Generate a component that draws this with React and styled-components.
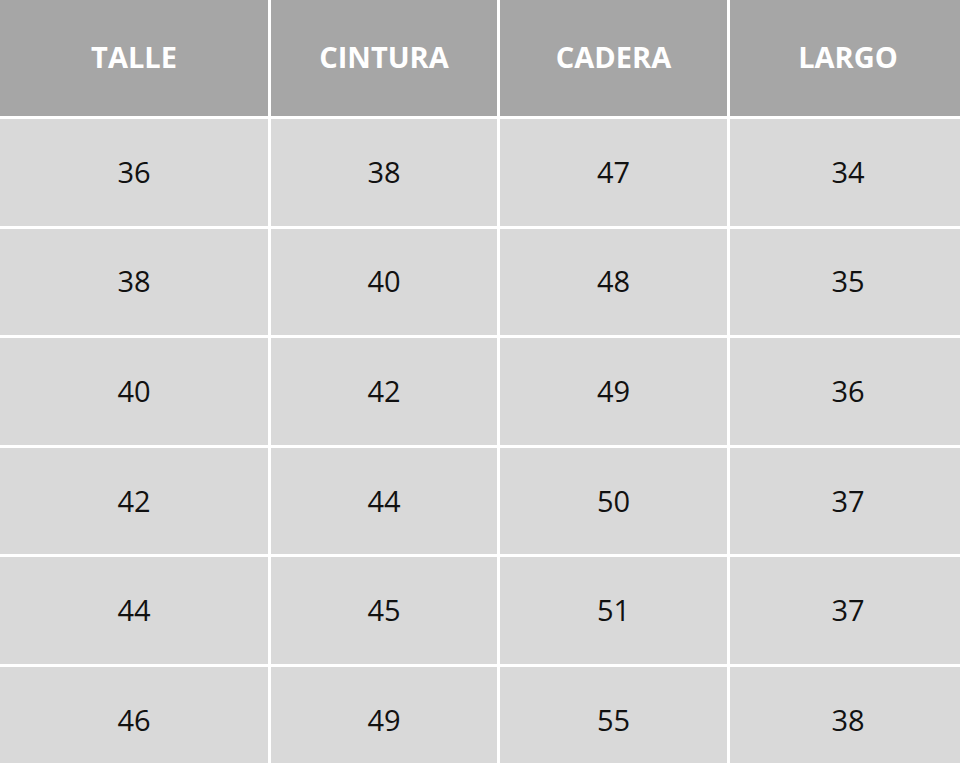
import React from 'react';
import styled, { createGlobalStyle } from 'styled-components';

const GlobalStyle = createGlobalStyle`
  html, body {
    margin: 0;
    padding: 0;
    background: #ffffff;
    overflow: hidden;
  }
`;

const Table = styled.div`
  display: grid;
  grid-template-columns: 268px 226px 227px 236px;
  grid-template-rows: 116px;
  grid-auto-rows: 106.6px;
  gap: 3px;
  width: 966px;
  background: #ffffff;
  font-family: "Open Sans", "Liberation Sans", sans-serif;
`;

const HeadCell = styled.div`
  background: #a6a6a6;
  color: #ffffff;
  font-weight: 700;
  font-size: 29px;
  display: flex;
  align-items: center;
  justify-content: center;
  padding-bottom: 4px;
`;

const Cell = styled.div`
  background: #d9d9d9;
  color: #111111;
  font-size: 29px;
  display: flex;
  align-items: center;
  justify-content: center;
  padding-bottom: 2px;
`;

const headers = ['TALLE', 'CINTURA', 'CADERA', 'LARGO'];

const rows = [
  ['36', '38', '47', '34'],
  ['38', '40', '48', '35'],
  ['40', '42', '49', '36'],
  ['42', '44', '50', '37'],
  ['44', '45', '51', '37'],
  ['46', '49', '55', '38'],
];

function App() {
  return (
    <>
      <GlobalStyle />
      <Table>
        {headers.map((h) => (
          <HeadCell key={h}>{h}</HeadCell>
        ))}
        {rows.map((row, i) =>
          row.map((v, j) => <Cell key={`${i}-${j}`}>{v}</Cell>)
        )}
      </Table>
    </>
  );
}

export default App;
